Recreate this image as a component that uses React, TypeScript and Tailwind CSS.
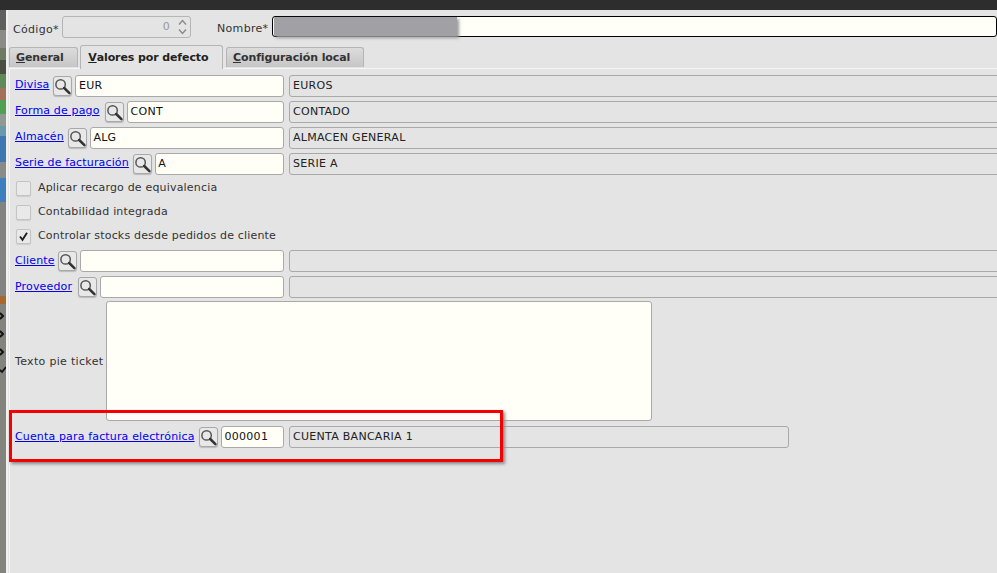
import React from 'react'

const SearchGlyph = () => (
  <svg width="17" height="17" viewBox="0 0 17 17" fill="none">
    <circle cx="6.6" cy="6.4" r="4.7" stroke="#555" strokeWidth="1.5" fill="#e8e8e8" />
    <path d="M10.2 10 L15.4 15.2" stroke="#333" strokeWidth="2.5" strokeLinecap="round" />
  </svg>
)

const LookupRow = ({ label, code = '', desc = '', descWidth = 'w-[760px]', labelClass = '-mt-[2px]' }: { label: string; code?: string; desc?: string; descWidth?: string; labelClass?: string }) => (
  <div className="flex h-[26px] items-center">
    <div className="flex w-[269px] shrink-0 items-center">
      <a className={`whitespace-nowrap tracking-[0.15px] text-[#0000ee] underline ${labelClass}`}>{label}</a>
      <button className="ml-[4px] flex h-[20px] w-[19px] shrink-0 items-center justify-center rounded-[3px] border border-[#a8a8a8] bg-[#e8e8e8] shadow-[0_1px_1px_#bbb]">
        <SearchGlyph />
      </button>
      <div className="ml-[3px] flex h-[22px] min-w-0 flex-1 items-center rounded-[3px] border border-[#a9a9a9] bg-[#fffff8] px-[2.5px] tracking-[0.28px] text-[#111]">{code}</div>
    </div>
    <div className={`ml-[5px] flex h-[22px] shrink-0 items-center rounded-[3px] border border-[#a9a9a9] bg-[#e4e4e4] px-[3px] tracking-[0.28px] text-[#222] ${descWidth}`}>{desc}</div>
  </div>
)

const CheckRow = ({ label, checked = false }: { label: string; checked?: boolean }) => (
  <div className="flex h-[24px] items-center pl-[1px]">
    <div className="flex h-[15px] w-[15px] shrink-0 items-center justify-center rounded-[2px] border border-[#c4c4c4] bg-[#e9e9e9] shadow-[0_1px_1px_#ccc]">
      {checked && (
        <svg width="11" height="11" viewBox="0 0 11 11" fill="none">
          <path d="M2 5.5 L4.5 8.8 L9 1.8" stroke="#222" strokeWidth="1.9" />
        </svg>
      )}
    </div>
    <span className="ml-[7px] tracking-[0.18px] text-[#333]">{label}</span>
  </div>
)

const Tab = ({ first, rest, active = false }: { first: string; rest: string; active?: boolean }) => (
  <div className={active
    ? 'z-10 -mb-px flex h-[24px] items-center rounded-t-[3px] border border-b-0 border-[#b5b5b5] bg-[#e4e4e4] pl-[7px] pr-[14px] pt-[1px] font-bold tracking-[-0.1px] text-[#222]'
    : 'mt-[2px] flex h-[20px] items-center rounded-t-[3px] border border-b-0 border-[#b5b5b5] bg-gradient-to-b from-[#dcdcdc] to-[#c6c6c6] pl-[6px] pr-[13px] pt-[2px] font-bold tracking-[-0.1px] text-[#333]'}>
    <span className="underline">{first}</span>{rest}
  </div>
)

const stripColors = [
  ['h-[20px]', 'bg-[#5f5f5c]'],
  ['h-[18px]', 'bg-[#8a8a86]'],
  ['h-[12px]', 'bg-[#6f7a66]'],
  ['h-[14px]', 'bg-[#4b4f42]'],
  ['h-[14px]', 'bg-[#5d8a58]'],
  ['h-[12px]', 'bg-[#a3705c]'],
  ['h-[14px]', 'bg-[#4fa050]'],
  ['h-[12px]', 'bg-[#8f9a94]'],
  ['h-[10px]', 'bg-[#6a9aaa]'],
  ['h-[26px]', 'bg-[#3f78b0]'],
  ['h-[16px]', 'bg-[#8a8a86]'],
  ['h-[24px]', 'bg-[#3d80bd]'],
  ['h-[94px]', 'bg-[#83837f]'],
  ['h-[8px]', 'bg-[#a9692c]'],
]

export default function App() {
  return (
    <div className="flex h-[573px] w-[997px] flex-col overflow-hidden bg-[#e4e4e4] text-[11px] tracking-[0.32px] font-['DejaVu_Sans',sans-serif]">
      <div className="h-[10px] shrink-0 bg-[#2d2d2d]" />
      <div className="flex min-h-0 flex-1">
        {/* trozo de la ventana de detras */}
        <div className="flex w-[6px] shrink-0 flex-col">
          {stripColors.map(([h, bg], i) => (
            <div key={i} className={`${h} ${bg}`} />
          ))}
          <div className="flex flex-1 flex-col gap-[10px] bg-[#84847f] pt-[8px]">
            {[0, 1, 2].map((i) => (
              <svg key={i} className="shrink-0" width="6" height="8" viewBox="0 0 6 8" fill="none">
                <path d="M0 1 L3 4 L0 7" stroke="#111" strokeWidth="2" />
              </svg>
            ))}
            <svg className="shrink-0" width="6" height="8" viewBox="0 0 6 8" fill="none">
              <path d="M0 4 L2 6 L6 1" stroke="#111" strokeWidth="1.8" />
            </svg>
          </div>
        </div>
        <div className="w-[2px] shrink-0 bg-[#f1f1f1]" />
        <div className="min-w-0 flex-1 overflow-hidden">
          {/* cabecera */}
          <div className="flex h-[35px] items-start pt-[6px]">
            <span className="ml-[5px] mt-[6px] w-[49px] text-[#333]">Código*</span>
            <div className="flex h-[22px] w-[129px] items-center justify-end rounded-[3px] border border-[#b5b5b5] pr-[3px] text-[#999]">
              <span className="mr-[8px]">0</span>
              <div className="flex flex-col text-[#8a8a8a]">
                <svg width="9" height="7" viewBox="0 0 9 7" fill="none"><path d="M1 5.5 L4.5 1.5 L8 5.5" stroke="currentColor" strokeWidth="1.4" /></svg>
                <svg className="mt-[2px]" width="9" height="7" viewBox="0 0 9 7" fill="none"><path d="M1 1.5 L4.5 5.5 L8 1.5" stroke="currentColor" strokeWidth="1.4" /></svg>
              </div>
            </div>
            <span className="ml-[26px] mt-[5px] w-[55px] text-[#333]">Nombre*</span>
            <div className="h-[21px] flex-1 rounded-[3px] border border-black bg-[#fffff8] pl-px">
              <div className="h-[19px] w-[183px] bg-[#a1a0a4] shadow-[2px_2px_3px_#999]" />
            </div>
          </div>
          {/* pestanas */}
          <div className="flex h-[23px] items-start gap-[2.5px] pl-[1px]">
            <Tab first="G" rest="eneral" />
            <Tab first="V" rest="alores por defecto" active />
            <Tab first="C" rest="onfiguración local" />
          </div>
          <div className="ml-px h-full border-l border-t border-[#f5f5f5] pl-[5px] pt-[4px]">
            <LookupRow label="Divisa" code="EUR" desc="EUROS" />
            <LookupRow label="Forma de pago" code="CONT" desc="CONTADO" labelClass="-mt-[2px] w-[86px]" />
            <LookupRow label="Almacén" code="ALG" desc="ALMACEN GENERAL" />
            <LookupRow label="Serie de facturación" code="A" desc="SERIE A" />
            <div className="-mt-[1px] flex flex-col">
              <CheckRow label="Aplicar recargo de equivalencia" />
              <CheckRow label="Contabilidad integrada" />
              <CheckRow label="Controlar stocks desde pedidos de cliente" checked />
            </div>
            <LookupRow label="Cliente" labelClass="w-[38.5px]" />
            <LookupRow label="Proveedor" labelClass="w-[59px]" />
            <div className="flex items-center pt-[1px]">
              <span className="mt-[2px] w-[91px] text-[#333]">Texto pie ticket</span>
              <div className="h-[120px] w-[546px] rounded-[3px] border border-[#a9a9a9] bg-[#fffff8]" />
            </div>
            <div className="pt-[3px]">
              <LookupRow label="Cuenta para factura electrónica" code="000001" desc="CUENTA BANCARIA 1" descWidth="w-[500px]" labelClass="w-[180px]" />
            </div>
          </div>
        </div>
      </div>
      {/* recuadro rojo de la anotacion */}
      <div className="absolute left-[9px] top-[410px] h-[52px] w-[494px] border-[3px] border-[#f40000] shadow-[2px_2px_3px_#888]" />
    </div>
  )
}
